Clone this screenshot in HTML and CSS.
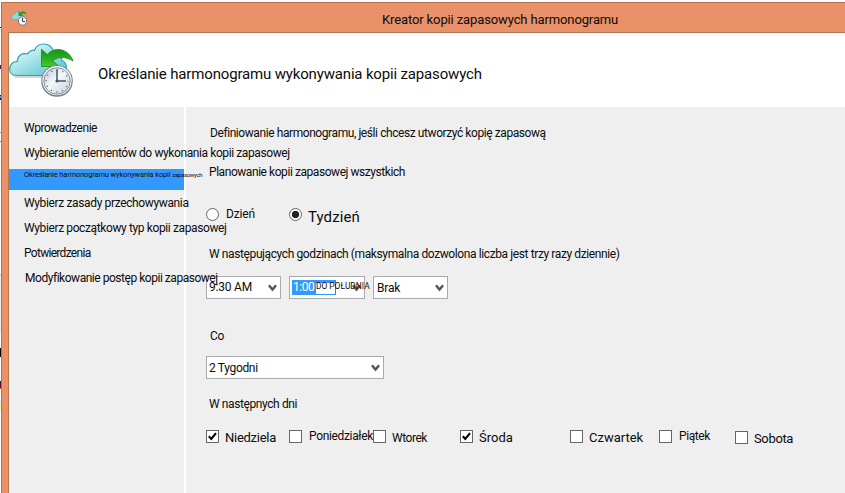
FILE: index.html
```
<!DOCTYPE html>
<html lang="pl">
<head>
<meta charset="utf-8">
<title>Kreator kopii zapasowych harmonogramu</title>
<link rel="stylesheet" href="styles.css">
</head>
<body>
<svg width="0" height="0" class="defs">
  <defs>
    <linearGradient id="cloud" x1="0" y1="0" x2="1" y2="1"><stop offset="0" stop-color="#72cdd6"/><stop offset=".3" stop-color="#c6eff1"/><stop offset=".6" stop-color="#8ed9df"/><stop offset="1" stop-color="#55bfca"/></linearGradient>
    <linearGradient id="arrow" x1="0" y1="0" x2="0" y2="1"><stop offset="0" stop-color="#189018"/><stop offset=".5" stop-color="#25ae1c"/><stop offset="1" stop-color="#45cc31"/></linearGradient>
    <linearGradient id="face" x1="0" y1="0" x2="1" y2="1"><stop offset="0" stop-color="#b9c9d6"/><stop offset=".45" stop-color="#f4f8fa"/><stop offset="1" stop-color="#c3d0db"/></linearGradient>
    <symbol id="backup" viewBox="0 0 66 56">
      <path d="M6 34h48" stroke="#999" stroke-opacity=".4" stroke-width="2"/>
      <path d="M7 32.500C2.500 32.500.700 29 .700 26C.700 21.500 4 18.500 8.300 18.300C8.500 12.500 13 9.500 18.200 11C20.500 8.500 23 6.800 25.500 7.300C27 3 30.500 1 34.500 1C39.500 1 43.500 4 44.300 8.500C49 9.500 52.500 13 53 17.500C56.500 19 58 22 57 27C56.400 30.500 54 32.500 51 32.500Z" fill="url(#cloud)" stroke="#28a5b4" stroke-width="1.200"/>
      <path d="M32.500 6.200V23.500H50L43.600 17.500C50 13.300 57 13.700 64 18C61 7.500 47 1.500 38.200 11.500Z" fill="url(#arrow)" stroke="#168b18" stroke-width=".8"/>
      <circle cx="48" cy="38" r="15.800" fill="#777f86"/>
      <circle cx="48" cy="37.600" r="14.700" fill="#f5f7f8"/>
      <circle cx="48" cy="38" r="13.200" fill="url(#face)" stroke="#77838e" stroke-width=".9"/>
      <circle cx="48" cy="38" r="11" fill="none" stroke="#52677c" stroke-width="1.600" stroke-dasharray="1 4.760" stroke-dashoffset=".5"/>
      <path d="M48 26.500V38H57" fill="none" stroke="#43576b" stroke-width="1.500"/>
      <circle cx="48" cy="38" r="1.600" fill="#43576b"/>
    </symbol>
    <symbol id="backup-small" viewBox="0 0 16 16">
      <path d="M2 9.500C.2 9.500 0 6.500 1.800 6C1.800 4 3.300 3 4.800 3.400C6 .8 9.500.8 10.500 3.200L12.500 9.500Z" fill="#8fd9de" stroke="#4fb4bc" stroke-width=".7"/>
      <path d="M7.500 1V6H12.500L10.700 4.300C12.500 3.200 14.300 3.500 16 4.600C15.200 1.300 11.500.2 9.300 2.600Z" fill="#2a9e24"/>
      <circle cx="11.500" cy="11" r="4.200" fill="#f2f5f7" stroke="#6b757e" stroke-width=".9"/>
      <path d="M11.500 8V11.500H14" fill="none" stroke="#34485a" stroke-width="1"/>
    </symbol>
    <symbol id="chevron" viewBox="0 0 8 7"><path d="M.8 1L4 4.800L7.200 1" fill="none" stroke="#555" stroke-width="2.200"/></symbol>
    <symbol id="tick" viewBox="0 0 11 11"><path d="M1.800 5.200L4.300 8L9 2.200" fill="none" stroke="#000" stroke-width="2.100"/></symbol>
  </defs>
</svg>
<div class="desktop">
  <div class="edge"></div>
  <div class="window">
    <header class="titlebar">
      <svg class="title-icon"><use href="#backup-small"/></svg>
      <h1 class="title">Kreator kopii zapasowych harmonogramu</h1>
    </header>
    <div class="client">
      <div class="banner">
        <svg class="banner-icon"><use href="#backup"/></svg>
        <h2 class="heading">Określanie harmonogramu wykonywania kopii zapasowych</h2>
      </div>
      <div class="body">
        <nav class="steps">
          <div class="step s1">Wprowadzenie</div>
          <div class="step s2">Wybieranie elementów do wykonania kopii zapasowej</div>
          <div class="step active">Określanie harmonogramu wykonywania kopii <span class="tight">zapasowych</span></div>
          <div class="step s4">Wybierz zasady przechowywania</div>
          <div class="step s5">Wybierz początkowy typ kopii zapasowej</div>
          <div class="step s6">Potwierdzenia</div>
          <div class="step s7">Modyfikowanie postęp kopii zapasowej</div>
        </nav>
        <main class="form">
          <p class="line intro">Definiowanie harmonogramu, jeśli chcesz utworzyć kopię zapasową</p>
          <p class="line plan">Planowanie kopii zapasowej wszystkich</p>
          <div class="radios">
            <span class="radio"></span><span class="day">Dzień</span>
            <span class="radio on"></span><span class="week">Tydzień</span>
          </div>
          <p class="line times">W następujących godzinach (maksymalna dozwolona liczba jest trzy razy dziennie)</p>
          <div class="selects">
            <div class="select first"><span class="value">9:30 AM</span><svg class="chev"><use href="#chevron"/></svg></div>
            <div class="select second"><span class="picked"><span class="hour">1:00</span><span class="noon">DO POŁUDNIA</span></span><svg class="chev"><use href="#chevron"/></svg></div>
            <div class="select third"><span class="value">Brak</span><svg class="chev"><use href="#chevron"/></svg></div>
          </div>
          <p class="line every">Co</p>
          <div class="select weeks"><span class="value">2 Tygodni</span><svg class="chev"><use href="#chevron"/></svg></div>
          <p class="line days-label">W następnych dni</p>
          <div class="days">
            <div class="check"><span class="box"><svg><use href="#tick"/></svg></span><span class="name sun">Niedziela</span></div>
            <div class="check"><span class="box"></span><span class="name mon">Poniedziałek</span></div>
            <div class="check"><span class="box"></span><span class="name tue">Wtorek</span></div>
            <div class="check"><span class="box"><svg><use href="#tick"/></svg></span><span class="name wed">Środa</span></div>
            <div class="check"><span class="box"></span><span class="name thu">Czwartek</span></div>
            <div class="check"><span class="box"></span><span class="name fri">Piątek</span></div>
            <div class="check low"><span class="box"></span><span class="name sat">Sobota</span></div>
          </div>
        </main>
      </div>
    </div>
  </div>
</div>
</body>
</html>
```
FILE: styles.css
```
* { box-sizing: border-box; }
body { margin: 0; background: #fff; color: #0c0c0c; font: 12px/16px Roboto, "Liberation Sans", sans-serif; white-space: nowrap; overflow: hidden; }
h1, h2, p { margin: 0; font-weight: 400; }
.defs { position: absolute; }
.desktop { display: flex; height: 493px; overflow: hidden; }
.edge {
  width: 1px;
  background: linear-gradient(#fff 27px, #222 27px 28px, #fff 28px 65px, #502050 65px 69px, #fff 69px 95px, #222 95px 96px, #4b9de0 96px 98px, #111 98px 100px, #fff 100px 132px, #999 132px 133px, #fff 133px 141px, #888 141px 142px, #fff 142px 274px, #bbb 274px 275px, #eee 275px 334px, #fff 334px 348px, #000 348px 357px, #fff 357px 381px, #5a0040 381px 388px, #d08020 388px 389px, #fff 389px 401px, #ecd0a0 401px 402px, #fff 402px 404px, #fbf5a8 404px 410px, #fff 410px);
}
.window { flex: 1; margin-top: 2px; border: solid #b5714f; border-width: 1px 0 0 1px; background: #e99168; padding-left: 6px; }
.titlebar { display: flex; align-items: center; height: 29px; }
.title-icon { width: 16px; height: 16px; margin: 0 0 0 3px; }
.title { margin: 4px 0 0 355px; font-size: 13px; letter-spacing: -.12px; }
.client { border: solid #b5774f; border-width: 1px 0 0 1px; background: #fff; }
.banner { display: flex; height: 74px; }
.banner-icon { width: 66px; height: 56px; margin-top: 10px; }
.heading { margin: 31px 0 0 23px; font-size: 15px; line-height: 20px; letter-spacing: -.16px; }
.body { display: flex; height: 386px; }
.steps { position: relative; z-index: 1; width: 175px; margin-right: 2px; padding-top: 9px; background: #efefef; }
.step { height: 25px; padding: 4px 0 0 15px; }
.s1 { letter-spacing: -.47px; }
.s2 { letter-spacing: -.4px; }
.step.active { height: 21px; margin: 3px 0 1px; padding-top: 0; background: #3399ff; font-size: 7.4px; line-height: 12px; letter-spacing: -.1px; }
.tight { font-size: 6px; letter-spacing: -.3px; }
.s4 { letter-spacing: -.36px; }
.s5 { letter-spacing: -.38px; }
.s6 { font-size: 12px; letter-spacing: -.7px; }
.s7 { padding-left: 16px; letter-spacing: -.47px; }
.form { flex: 1; padding: 18px 0 0 20px; background: #efefef; }
.intro { padding-left: 4px; letter-spacing: -.42px; }
.plan { margin-top: 23px; padding-left: 3px; letter-spacing: -.44px; }
.radios { display: flex; height: 20px; margin-top: 26px; }
.radio { flex: none; width: 13px; height: 13px; margin-top: 2px; border: 1px solid #666; border-radius: 50%; background: #fff; }
.radio.on { background: radial-gradient(circle, #222 3.3px, #fff 4.1px); }
.day { width: 70px; padding-left: 7px; letter-spacing: -.15px; }
.week { padding: 3px 0 0 6px; font-size: 15px; letter-spacing: .1px; }
.times { margin-top: 20px; padding-left: 3px; letter-spacing: -.39px; }
.selects { display: flex; margin-top: 14px; }
.select { display: flex; align-items: center; justify-content: space-between; height: 23px; padding: 0 3px 0 2px; border: 1px solid #a9aab0; background: #fff; }
.chev { flex: none; width: 9px; height: 8px; margin-top: 1px; }
.first { width: 75px; margin-right: 8px; }
.second { width: 76px; margin-right: 8px; }
.third { width: 75px; padding-left: 3px; }
.value { letter-spacing: -.2px; }
.first .value { padding-bottom: 1px; }
.picked { display: flex; align-items: center; position: relative; width: 44px; height: 15px; margin-top: -1px; background: #3399ff; border-right: 1px solid #b86224; }
.hour { width: 24px; color: #fff; letter-spacing: -.5px; padding-left: 1px; }
.noon { width: 19px; height: 11px; margin-top: 2px; background: #fff; font-size: 8.4px; line-height: 7px; z-index: 1; }
.every { margin-top: 29px; padding-left: 4px; letter-spacing: -.2px; }
.weeks { width: 178px; margin-top: 12px; }
.weeks .value { letter-spacing: -.33px; }
.days-label { margin-top: 17px; padding-left: 3px; letter-spacing: -.4px; }
.days { display: grid; grid-template-columns: 83px 84px 87px 110px 89px 76px 80px; margin-top: 18px; }
.check { display: flex; }
.low { padding-top: 1px; }
.box { flex: none; width: 13px; height: 13px; border: 1px solid #666; background: #fff; }
.box svg { display: block; width: 11px; height: 11px; }
.name { padding-left: 6px; }
.sun { font-size: 13px; letter-spacing: -.27px; }
.mon { margin-top: -2px; padding-left: 7px; letter-spacing: -.34px; }
.tue { letter-spacing: -.45px; }
.wed { font-size: 13px; }
.thu { font-size: 13px; }
.fri { margin-top: -2px; padding-left: 7px; letter-spacing: -.4px; }
.sat { font-size: 13px; letter-spacing: -.35px; }
```
